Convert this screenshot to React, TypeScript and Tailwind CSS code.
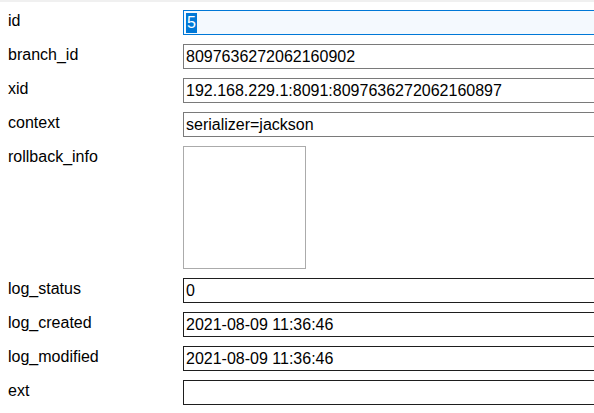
import React from "react";

type Row = {
  label: string;
  value: string;
  tone: "focus" | "gray" | "dark";
};

const topRows: Row[] = [
  { label: "id", value: "5", tone: "focus" },
  { label: "branch_id", value: "8097636272062160902", tone: "gray" },
  { label: "xid", value: "192.168.229.1:8091:8097636272062160897", tone: "gray" },
  { label: "context", value: "serializer=jackson", tone: "gray" },
];

const bottomRows: Row[] = [
  { label: "log_status", value: "0", tone: "dark" },
  { label: "log_created", value: "2021-08-09 11:36:46", tone: "dark" },
  { label: "log_modified", value: "2021-08-09 11:36:46", tone: "dark" },
  { label: "ext", value: "", tone: "dark" },
];

const toneClass = {
  focus: "border-[#0078d7] bg-[#f4f9fe]",
  gray: "border-[#7a7a7a] bg-white",
  dark: "border-[#1e1e1e] bg-white",
};

const Field = ({ row }: { row: Row }) => (
  <div className="flex items-start">
    <div className="w-[183px] shrink-0 pl-2 pt-[1px] leading-5">{row.label}</div>
    <div
      className={`flex h-[25px] w-[430px] shrink-0 items-center border px-[2px] leading-[18px] ${toneClass[row.tone]}`}
    >
      {row.tone === "focus" ? (
        <span className="bg-[#0078d7] px-[1px] leading-5 text-white">{row.value}</span>
      ) : (
        <span className="whitespace-nowrap">{row.value}</span>
      )}
    </div>
  </div>
);

export default function App() {
  return (
    <div className="h-[413px] w-[594px] overflow-hidden bg-white font-['Liberation_Sans',Arial,sans-serif] text-[16px] text-black">
      <div className="h-[2px] bg-[#f0f0f0]" />
      <div className="flex flex-col gap-[9px] pt-[8px]">
        {topRows.map((r) => (
          <Field key={r.label} row={r} />
        ))}
        <div className="flex items-start">
          <div className="w-[183px] shrink-0 pl-2 pt-[1px] leading-5">rollback_info</div>
          <div className="h-[123px] w-[123px] shrink-0 border border-[#ababab] bg-white" />
        </div>
        {bottomRows.map((r) => (
          <Field key={r.label} row={r} />
        ))}
      </div>
    </div>
  );
}
